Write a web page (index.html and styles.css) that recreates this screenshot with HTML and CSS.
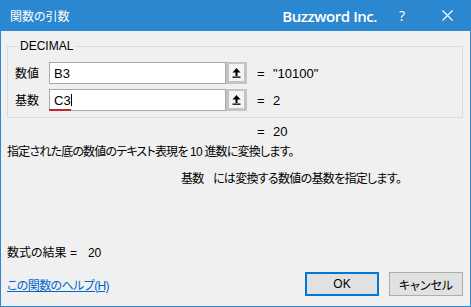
FILE: index.html
```html
<!DOCTYPE html>
<html lang="ja">
<head>
<meta charset="utf-8">
<link rel="stylesheet" href="styles.css">
</head>
<body>
<div class="window">
  <div class="titlebar">
    <span class="title">関数の引数</span>
    <span class="brand">Buzzword Inc.</span>
    <span class="help">?</span>
    <span class="close"><svg width="11" height="11" viewBox="0 0 11 11"><path d="M0.5 0.5 L10.5 10.5 M10.5 0.5 L0.5 10.5" stroke="#fff" stroke-width="1.1" fill="none"/></svg></span>
  </div>
  <div class="body">
    <fieldset class="group">
      <legend>DECIMAL</legend>
      <div class="row">
        <span class="label">数値</span>
        <div class="field"><span class="text">B3</span></div>
        <span class="ref"><span class="ref-inner"><svg width="9" height="10" viewBox="0 0 9 10"><path d="M4.5 0 L8.5 4.5 L0.5 4.5 Z" fill="#000"/><rect x="3.5" y="4" width="2" height="4" fill="#000"/><rect x="0.5" y="8.5" width="8" height="1.3" fill="#000"/></svg></span></span>
        <span class="eq">=</span><span class="val">"10100"</span>
      </div>
      <div class="row">
        <span class="label">基数</span>
        <div class="field"><span class="text">C3</span><span class="caret"></span><span class="squiggle"></span></div>
        <span class="ref"><span class="ref-inner"><svg width="9" height="10" viewBox="0 0 9 10"><path d="M4.5 0 L8.5 4.5 L0.5 4.5 Z" fill="#000"/><rect x="3.5" y="4" width="2" height="4" fill="#000"/><rect x="0.5" y="8.5" width="8" height="1.3" fill="#000"/></svg></span></span>
        <span class="eq">=</span><span class="val">2</span>
      </div>
    </fieldset>
    <div class="result-row"><span class="eq">=</span><span class="val">20</span></div>
    <p class="desc">指定された底の数値のテキスト表現を 10 進数に変換します。</p>
    <p class="argdesc"><span class="argname">基数</span><span>には変換する数値の基数を指定します。</span></p>
    <div class="formula"><span>数式の結果 =</span><span class="formula-val">20</span></div>
    <div class="footer">
      <a class="helplink" href="#">この関数のヘルプ(H)</a>
      <div class="buttons">
        <button class="btn ok">OK</button>
        <button class="btn">キャンセル</button>
      </div>
    </div>
  </div>
</div>
</body>
</html>
```
FILE: styles.css
```css
* { box-sizing: border-box; }
html, body { margin: 0; padding: 0; }
body {
  width: 471px;
  height: 307px;
  background: #f0f0f0;
  font-family: "Liberation Sans", "Noto Sans CJK JP", sans-serif;
  font-size: 12px;
  color: #000;
  font-feature-settings: "palt";
}
.window {
  width: 471px;
  height: 307px;
  border: 1px solid #2b88d0;
  border-top: 0;
  background: #f0f0f0;
  display: flex;
  flex-direction: column;
}
.titlebar {
  height: 31px;
  margin: 0 -1px;
  background: #2b88d0;
  color: #fff;
  display: flex;
  align-items: center;
  padding-left: 10px;
}
.title {
  font-size: 12px;
  font-family: "Noto Sans CJK JP", sans-serif;
}
.brand {
  margin-left: auto;
  margin-right: 10px;
  font-family: "Open Sans", sans-serif;
  font-weight: 600;
  font-size: 15px;
  letter-spacing: -0.45px;
}
.help {
  width: 30px;
  text-align: center;
  font-family: "Open Sans", sans-serif;
  font-size: 14px;
}
.close {
  width: 47px;
  margin-left: 7px;
  display: flex;
  justify-content: center;
  align-items: center;
}
.close svg { display: block; }
.body {
  flex: 1;
  padding: 0 7px 0 6px;
  display: flex;
  flex-direction: column;
}
.group {
  margin: 8px 0 0 0;
  padding: 9px 7px 6px 7px;
  border: 1px solid #dcdcdc;
  min-width: 0;
}
.group legend {
  margin-left: 3px;
  padding: 0 2px;
  line-height: 14px;
  font-size: 12px;
}
.row {
  display: flex;
  align-items: center;
  height: 22px;
}
.row + .row { margin-top: 5px; }
.label {
  width: 34px;
  font-family: "Noto Sans CJK JP", sans-serif;
  line-height: 14px;
}
.field {
  position: relative;
  width: 177px;
  height: 22px;
  background: #fff;
  border: 1px solid #a9a9a9;
  display: flex;
  align-items: center;
  padding-left: 4px;
  font-size: 13px;
}
.caret {
  width: 1px;
  height: 12px;
  background: #000;
  margin-left: 0;
}
.squiggle {
  position: absolute;
  left: -1px;
  bottom: -1px;
  width: 22px;
  height: 2px;
  background: #c0262c;
}
.ref {
  width: 21px;
  height: 22px;
  background: #c4c4c4;
  padding: 2px 3px 3px 3px;
  display: flex;
}
.ref-inner {
  flex: 1;
  background: #f4f4f4;
  display: flex;
  align-items: center;
  justify-content: center;
}
.ref-inner svg { display: block; }
.eq {
  width: 16px;
  margin-left: 10px;
  font-size: 13px;
}
.val {
  font-size: 13px;
}
.result-row {
  display: flex;
  margin-top: 7px;
  margin-left: 250px;
  line-height: 14px;
}
.result-row .eq { margin-left: 0; }
.desc {
  margin: 6px 0 0 0;
  line-height: 14px;
  letter-spacing: -0.8px;
}
.argdesc {
  margin: 13px 0 0 0;
  padding-left: 174px;
  line-height: 14px;
  display: flex;
  letter-spacing: -0.7px;
}
.argname { width: 32px; }
.formula {
  margin-top: 60px;
  line-height: 14px;
  display: flex;
}
.formula-val { margin-left: 11px; }
.footer {
  margin-top: 12px;
  display: flex;
  align-items: center;
  height: 24px;
}
.helplink {
  color: #0066cc;
  text-decoration: underline;
  letter-spacing: -0.6px;
}
.buttons {
  margin-left: auto;
  display: flex;
  gap: 10px;
}
.btn {
  width: 74px;
  height: 24px;
  background: #e1e1e1;
  border: 1px solid #adadad;
  font-family: "Liberation Sans", "Noto Sans CJK JP", sans-serif;
  font-size: 12px;
  font-feature-settings: "palt";
  color: #000;
  padding: 0;
}
.btn.ok {
  border: 2px solid #0078d7;
}
```
